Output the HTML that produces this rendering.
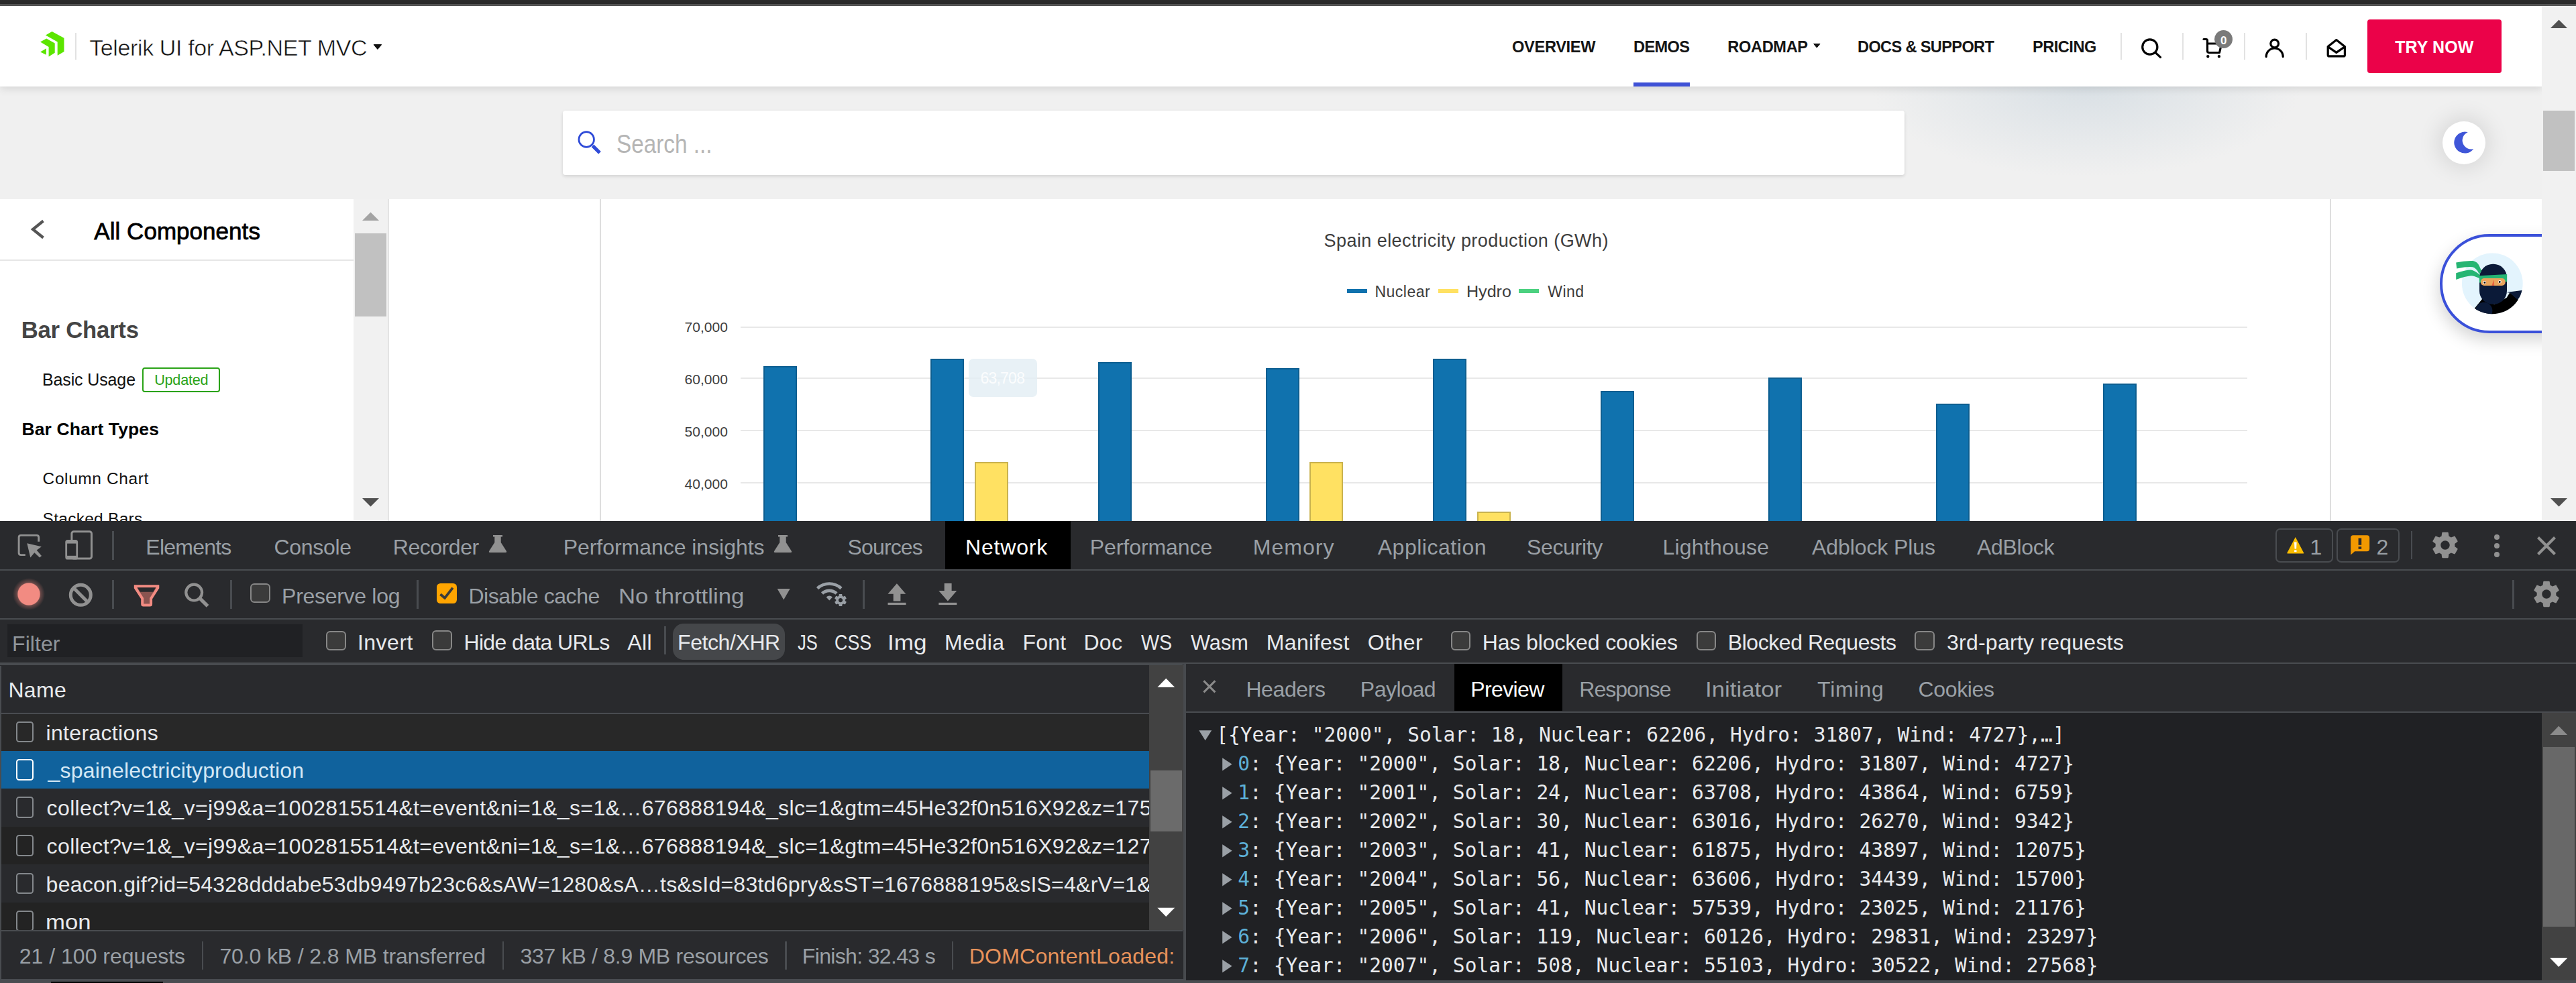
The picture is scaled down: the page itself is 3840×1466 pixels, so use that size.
<!DOCTYPE html>
<html lang="en"><head><meta charset="utf-8"><title>Telerik UI for ASP.NET MVC - Bar Charts</title>
<style>
html,body{margin:0;padding:0}
body{width:3840px;height:1466px;overflow:hidden;position:relative;background:#fff;font-family:"Liberation Sans",sans-serif}
.a{position:absolute;display:block}
.t{white-space:pre}
.m{font-family:"Liberation Mono",monospace}
.dm{font-family:"DejaVu Sans Mono",monospace}
.d{font-family:"DejaVu Sans",sans-serif}
.dc{font-family:"DejaVu Sans Condensed","DejaVu Sans",sans-serif}
</style></head>
<body>
<div class="a" style="left:0px;top:0px;width:3790px;height:777px;background:#f0f0f0;"></div>
<div class="a" style="left:2600px;top:129px;width:1000px;height:168px;background:radial-gradient(ellipse 320px 135px at 51% 0%,rgba(203,214,222,.62),rgba(240,240,240,0) 100%);"></div>
<div class="a" style="left:0px;top:0px;width:3840px;height:6px;background:#2b2b2b;"></div>
<div class="a" style="left:0px;top:6px;width:3840px;height:3px;background:#555;"></div>
<div class="a" style="left:0px;top:9px;width:3790px;height:120px;background:#fff;box-shadow:0 3px 12px rgba(0,0,0,.12);"></div>
<svg class="a" style="left:56px;top:44px;" width="44" height="44" viewBox="0 0 44 44"><g fill="#5ce500"><path d="M12 8.4 21.5 2.9 39.5 12.8V32.9L29.7 38.7V18.6Z"/><path d="M4.1 18.4 13.2 13.5 25.7 20.4V34.7L16.6 40.5V25.9Z"/><path d="M4.1 33.5 12.9 28.3V37.8Z"/></g></svg>
<div class="a" style="left:112px;top:49px;width:2px;height:40px;background:#e2e2e2;"></div>
<span class="a t" style="left:133.2px;top:54.1px;font-size:34px;line-height:34px;color:#111;letter-spacing:-0.38px;-webkit-text-stroke:.55px #fff;">Telerik UI for ASP.NET MVC</span>
<svg class="a" style="left:555px;top:64px;" width="16" height="12" viewBox="0 0 16 12"><path d="M2.4 2.7H13.4L7.9 9.2Z" fill="#111" stroke="#111" stroke-width="1.2" stroke-linejoin="round"/></svg>
<span class="a t" style="left:2254.1px;top:58.6px;font-size:23.6px;line-height:23.6px;color:#151515;font-weight:700;letter-spacing:-0.33px;">OVERVIEW</span>
<span class="a t" style="left:2435.0px;top:58.6px;font-size:23.6px;line-height:23.6px;color:#151515;font-weight:700;letter-spacing:-0.62px;">DEMOS</span>
<div class="a" style="left:2435px;top:123px;width:84px;height:6px;background:#3f51d6;"></div>
<span class="a t" style="left:2575.2px;top:58.6px;font-size:23.6px;line-height:23.6px;color:#151515;font-weight:700;letter-spacing:-0.33px;">ROADMAP</span>
<svg class="a" style="left:2701px;top:62.5px;" width="16" height="12" viewBox="0 0 16 12"><path d="M2.6 2.4H12L7.3 8Z" fill="#111" stroke="#111" stroke-width="1" stroke-linejoin="round"/></svg>
<span class="a t" style="left:2769.0px;top:58.6px;font-size:23.6px;line-height:23.6px;color:#151515;font-weight:700;letter-spacing:-0.65px;">DOCS &amp; SUPPORT</span>
<span class="a t" style="left:3030.0px;top:58.6px;font-size:23.6px;line-height:23.6px;color:#151515;font-weight:700;letter-spacing:-0.50px;">PRICING</span>
<div class="a" style="left:3161px;top:49px;width:2px;height:40px;background:#e2e2e2;"></div>
<div class="a" style="left:3253px;top:49px;width:2px;height:40px;background:#e2e2e2;"></div>
<div class="a" style="left:3345px;top:49px;width:2px;height:40px;background:#e2e2e2;"></div>
<div class="a" style="left:3437px;top:49px;width:2px;height:40px;background:#e2e2e2;"></div>
<svg class="a" style="left:3185px;top:50px;" width="44" height="44" viewBox="0 0 44 44"><g fill="none" stroke="#000" stroke-width="3.2" stroke-linecap="round"><circle cx="19.8" cy="20" r="11.1"/><path d="M28 28.3 35.5 35.3"/></g></svg>
<svg class="a" style="left:3278px;top:50px;" width="44" height="44" viewBox="0 0 44 44"><g fill="none" stroke="#000" stroke-width="3.2" stroke-linecap="round" stroke-linejoin="round"><path d="M7 8.5H10.5Q12.5 8.5 12.5 10.5V26Q12.5 28.5 15 28.5H30.5L32.5 20"/><path d="M13 15H32"/></g><circle cx="13.3" cy="34.1" r="2.2"/><circle cx="29.9" cy="34.1" r="2.2"/></svg>
<div class="a" style="left:3301.3px;top:45.2px;width:27.2px;height:27.2px;background:#7a7a7a;border-radius:50%;"></div>
<span class="a t" style="left:3310.0px;top:51.6px;font-size:17px;line-height:17px;color:#fff;font-weight:700;">0</span>
<svg class="a" style="left:3368px;top:50px;" width="46" height="44" viewBox="0 0 46 44"><g fill="none" stroke="#000" stroke-width="3.2" stroke-linecap="round"><circle cx="22.7" cy="15" r="5.9"/><path d="M10.2 34.5A12.5 12.5 0 0 1 35.2 34.5"/></g></svg>
<svg class="a" style="left:3460px;top:50px;" width="46" height="44" viewBox="0 0 46 44"><g fill="none" stroke="#000" stroke-width="3.2" stroke-linecap="round" stroke-linejoin="round"><path d="M12.2 33.9H33.4Q35.4 33.9 35.4 31.9V19.5L22.8 9.6 10.2 19.5V31.9Q10.2 33.9 12.2 33.9Z"/><path d="M11.2 20.4 22.8 28.4 34.4 20.4"/></g></svg>
<div class="a" style="left:3529px;top:29px;width:200px;height:80px;background:#eb0249;border-radius:4px;"></div>
<span class="a t" style="left:3570.2px;top:57.8px;font-size:25px;line-height:25px;color:#fff;font-weight:700;letter-spacing:0.08px;">TRY NOW</span>
<div class="a" style="left:839px;top:165px;width:2000px;height:96px;background:#fff;border-radius:4px;box-shadow:0 2px 5px rgba(0,0,0,.13);"></div>
<svg class="a" style="left:856px;top:190px;" width="46" height="46" viewBox="0 0 46 46"><g fill="none" stroke="#2f4bd8" stroke-linecap="butt"><circle cx="18.2" cy="18" r="11.3" stroke-width="2.7"/><path d="M27.5 27.3 38 37.8" stroke-width="5.2"/></g></svg>
<span class="a t" style="left:919.3px;top:195.3px;font-size:39px;line-height:39px;color:#b5b5b5;transform:scaleX(0.8537);transform-origin:0 0;">Search ...</span>
<div class="a" style="left:3641px;top:180.7px;width:64px;height:64px;background:#fff;border-radius:50%;box-shadow:0 0 32px 7px rgba(0,0,0,.10);"></div>
<svg class="a" style="left:3652px;top:192px;" width="42" height="42" viewBox="0 0 42 42"><path d="M26.7 5.2A16 16 0 1 0 35.3 29.9 13.1 13.1 0 0 1 26.7 5.2Z" fill="#3f56d8"/></svg>
<div class="a" style="left:3789px;top:9px;width:51px;height:768px;background:#f1f1f1;"></div>
<svg class="a" style="left:3789px;top:8px;" width="51" height="51" viewBox="0 0 51 51"><path d="M13 34H38L25.5 21.5Z" fill="#505050"/></svg>
<div class="a" style="left:3791px;top:165px;width:47px;height:90px;background:#c1c1c1;"></div>
<svg class="a" style="left:3789px;top:726px;" width="51" height="51" viewBox="0 0 51 51"><path d="M13 17H38L25.5 29.5Z" fill="#505050"/></svg>
<div class="a" style="left:0px;top:297px;width:527px;height:480px;background:#fff;"></div>
<div class="a" style="left:527px;top:297px;width:52px;height:480px;background:#f1f1f1;"></div>
<div class="a" style="left:579px;top:297px;width:3210px;height:480px;background:#fff;"></div>
<div class="a" style="left:578px;top:297px;width:2px;height:480px;background:#e4e4e4;"></div>
<div class="a" style="left:894px;top:297px;width:2px;height:480px;background:#dedede;"></div>
<div class="a" style="left:3473px;top:297px;width:2px;height:480px;background:#dedede;"></div>
<svg class="a" style="left:527px;top:296px;" width="51" height="51" viewBox="0 0 51 51"><path d="M13 33H38L25.5 20.5Z" fill="#a3a3a3"/></svg>
<div class="a" style="left:529px;top:348px;width:47px;height:124px;background:#c1c1c1;"></div>
<svg class="a" style="left:527px;top:726px;" width="51" height="51" viewBox="0 0 51 51"><path d="M13 17H38L25.5 29.5Z" fill="#505050"/></svg>
<svg class="a" style="left:40px;top:322px;" width="34" height="40" viewBox="0 0 34 40"><path d="M24.5 7.5 9 20 24.5 32.5" fill="none" stroke="#555" stroke-width="4.2"/></svg>
<span class="a t" style="left:140.3px;top:326.5px;font-size:35px;line-height:35px;color:#000;letter-spacing:0.04px;-webkit-text-stroke:.8px #000;">All Components</span>
<div class="a" style="left:0px;top:387px;width:527px;height:2px;background:#e6e6e6;"></div>
<span class="a t" style="left:31.7px;top:474.9px;font-size:34.7px;line-height:34.7px;color:#444;font-weight:700;letter-spacing:-0.23px;">Bar Charts</span>
<span class="a t" style="left:63.0px;top:553.8px;font-size:25px;line-height:25px;color:#111;letter-spacing:-0.13px;">Basic Usage</span>
<div class="a" style="left:212px;top:548px;width:116px;height:37px;background:#fff;box-sizing:border-box;border:2px solid #2aa316;border-radius:4px;"></div>
<span class="a t" style="left:230.2px;top:556.4px;font-size:21.7px;line-height:21.7px;color:#2aa316;letter-spacing:-0.27px;">Updated</span>
<span class="a t" style="left:32.5px;top:626.5px;font-size:26.5px;line-height:26.5px;color:#000;font-weight:700;letter-spacing:0.12px;">Bar Chart Types</span>
<span class="a t" style="left:63.6px;top:701.5px;font-size:24.5px;line-height:24.5px;color:#111;letter-spacing:0.59px;">Column Chart</span>
<span class="a t" style="left:63.6px;top:762.1px;font-size:24.5px;line-height:24.5px;color:#111;letter-spacing:0.27px;">Stacked Bars</span>
<span class="a t" style="left:1973.6px;top:346.4px;font-size:27px;line-height:27px;color:#3d3d3d;letter-spacing:0.43px;">Spain electricity production (GWh)</span>
<div class="a" style="left:2008px;top:431px;width:30px;height:6px;background:#1072ae;"></div>
<span class="a t" style="left:2049.4px;top:424.4px;font-size:23px;line-height:23px;color:#3d3d3d;letter-spacing:0.50px;">Nuclear</span>
<div class="a" style="left:2144px;top:431px;width:30px;height:6px;background:#ffe162;"></div>
<span class="a t" style="left:2185.5px;top:424.4px;font-size:23px;line-height:23px;color:#3d3d3d;transform:scaleX(1.0898);transform-origin:0 0;">Hydro</span>
<div class="a" style="left:2264px;top:431px;width:30px;height:6px;background:#4cd180;"></div>
<span class="a t" style="left:2307.3px;top:424.4px;font-size:23px;line-height:23px;color:#3d3d3d;letter-spacing:0.43px;">Wind</span>
<div class="a" style="left:1104px;top:487px;width:2246px;height:2px;background:#e8e8e8;"></div>
<span class="a t" style="left:1020.6px;top:477.2px;font-size:21px;line-height:21px;color:#3d3d3d;">70,000</span>
<div class="a" style="left:1104px;top:563px;width:2246px;height:2px;background:#e8e8e8;"></div>
<span class="a t" style="left:1020.6px;top:555.2px;font-size:21px;line-height:21px;color:#3d3d3d;">60,000</span>
<div class="a" style="left:1104px;top:641px;width:2246px;height:2px;background:#e8e8e8;"></div>
<span class="a t" style="left:1020.6px;top:633.2px;font-size:21px;line-height:21px;color:#3d3d3d;">50,000</span>
<div class="a" style="left:1104px;top:719px;width:2246px;height:2px;background:#e8e8e8;"></div>
<span class="a t" style="left:1020.6px;top:711.2px;font-size:21px;line-height:21px;color:#3d3d3d;">40,000</span>
<div class="a" style="left:1137.6px;top:546.3px;width:50px;height:234.7px;background:#1072ae;box-sizing:border-box;border:2px solid #0d5e90;"></div>
<div class="a" style="left:1387.3px;top:534.6px;width:50px;height:246.4px;background:#1072ae;box-sizing:border-box;border:2px solid #0d5e90;"></div>
<div class="a" style="left:1637.0px;top:540.0px;width:50px;height:241.0px;background:#1072ae;box-sizing:border-box;border:2px solid #0d5e90;"></div>
<div class="a" style="left:1886.7px;top:548.9px;width:50px;height:232.1px;background:#1072ae;box-sizing:border-box;border:2px solid #0d5e90;"></div>
<div class="a" style="left:2136.4px;top:535.4px;width:50px;height:245.6px;background:#1072ae;box-sizing:border-box;border:2px solid #0d5e90;"></div>
<div class="a" style="left:2386.1px;top:582.7px;width:50px;height:198.3px;background:#1072ae;box-sizing:border-box;border:2px solid #0d5e90;"></div>
<div class="a" style="left:2635.8px;top:562.5px;width:50px;height:218.5px;background:#1072ae;box-sizing:border-box;border:2px solid #0d5e90;"></div>
<div class="a" style="left:2885.5px;top:601.7px;width:50px;height:179.3px;background:#1072ae;box-sizing:border-box;border:2px solid #0d5e90;"></div>
<div class="a" style="left:3135.2px;top:571.5px;width:50px;height:209.5px;background:#1072ae;box-sizing:border-box;border:2px solid #0d5e90;"></div>
<div class="a" style="left:1453.0px;top:689.3px;width:50px;height:91.7px;background:#ffe162;box-sizing:border-box;border:2px solid #c9b24e;"></div>
<div class="a" style="left:1952.4px;top:689.0px;width:50px;height:92.0px;background:#ffe162;box-sizing:border-box;border:2px solid #c9b24e;"></div>
<div class="a" style="left:2202.1px;top:762.8px;width:50px;height:18.2px;background:#ffe162;box-sizing:border-box;border:2px solid #c9b24e;"></div>
<div class="a" style="left:1444.4px;top:535px;width:101.4px;height:56.8px;background:rgba(226,237,244,.8);border-radius:7px;"></div>
<span class="a t" style="left:1461.4px;top:553.0px;font-size:23px;line-height:23px;color:rgba(255,255,255,.85);letter-spacing:-0.76px;">63,708</span>
<div class="a" style="left:3637px;top:348.5px;width:300px;height:148.5px;box-sizing:border-box;border:4.5px solid #3a50d9;border-radius:74.25px;background:#fff;box-shadow:-2px 10px 24px rgba(0,0,0,.17);clip-path:inset(-50px 148px -50px -50px);"></div>
<svg class="a" style="left:3655px;top:375px;" width="112" height="100" viewBox="0 0 112 100"><defs><clipPath id="nj"><circle cx="60.3" cy="47.8" r="45.4"/></clipPath></defs>
<circle cx="60.3" cy="47.8" r="45.4" fill="#e3f4fd"/>
<g clip-path="url(#nj)"><path d="M28 92 45.5 70.6 63.2 78.7 81.6 69 86.4 61.3 98 71 112 80V100H28Z" fill="#000"/><path d="M81.6 60.9 110 57.3 98 72 86.4 61.7Z" fill="#0b1a38"/><circle cx="47.8" cy="88.4" r="12.6" fill="#0b1a38"/></g>
<rect x="41" y="18.8" width="41" height="60" rx="20" fill="#0b1a38"/>
<path d="M40.6 36.2 82.2 33.9V45L41 46.5Z" fill="#25b573"/>
<rect x="43" y="40" width="36.7" height="11" rx="5" fill="#e9a45c"/>
<circle cx="48.7" cy="46.2" r="2.3" fill="#fff"/><circle cx="71.5" cy="45.3" r="2.3" fill="#fff"/><circle cx="48.9" cy="46.4" r="1.4" fill="#000"/><circle cx="71.3" cy="45.5" r="1.4" fill="#000"/>
<path d="M59.4 51 62.5 42 63.2 51Z" fill="#e8623e"/>
<path d="M6.2 16.5Q20 13.5 31.3 14 38 15 41 22L44.2 29 41 34Q37 26 33 24 28 21.5 7.2 25.5Z" fill="#25b573"/>
<path d="M6.2 32.3Q20 27.5 28.4 27.5 34 28.5 41 34.2V40Q33 36 28.4 36.2 20 37 6.2 42Z" fill="#25b573"/></svg>
<div class="a" style="left:0px;top:777px;width:3840px;height:689px;background:#292a2d;"></div>
<div class="a" style="left:0px;top:849px;width:3840px;height:2px;background:#494c50;"></div>
<svg class="a" style="left:20px;top:786px;" width="130" height="56" viewBox="0 0 130 56"><path d="M17.8 41.6H11.1Q8.1 41.6 8.1 38.6V15.4Q8.1 12.4 11.1 12.4H34.7Q37.7 12.4 37.7 15.4V21.8" fill="none" stroke="#919191" stroke-width="2.9"/><path d="M20.3 24.3 41.9 29.3 34.7 34.5 42 43.1 39.1 45.6 31.3 38.2 25.3 45.6Z" fill="#919191"/><rect x="86.9" y="6.8" width="29.6" height="40.2" rx="3" fill="none" stroke="#919191" stroke-width="3"/><rect x="77.3" y="18.9" width="18.8" height="29.6" rx="3.6" fill="#919191"/><rect x="80.1" y="24.6" width="13.3" height="18.2" fill="#292a2d"/></svg>
<div class="a" style="left:167.2px;top:792.2px;width:2.8px;height:42.5px;background:#494c50;"></div>
<span class="a t" style="left:217.3px;top:799.9px;font-size:32px;line-height:32px;color:#9aa0a6;letter-spacing:-0.76px;">Elements</span>
<span class="a t" style="left:408.4px;top:799.9px;font-size:32px;line-height:32px;color:#9aa0a6;letter-spacing:-0.28px;">Console</span>
<span class="a t" style="left:585.8px;top:799.9px;font-size:32px;line-height:32px;color:#9aa0a6;letter-spacing:-0.47px;">Recorder</span>
<svg class="a" style="left:728px;top:798.2px;" width="28" height="26" viewBox="0 0 28 26"><path d="M7 0H21V2.4H18.7V11L26.8 23.8Q28 26 25.6 26H2.4Q0 26 1.2 23.8L9.3 11V2.4H7Z" fill="#919191"/></svg>
<span class="a t" style="left:839.7px;top:799.9px;font-size:32px;line-height:32px;color:#9aa0a6;letter-spacing:-0.04px;">Performance insights</span>
<svg class="a" style="left:1152.6px;top:798.2px;" width="28" height="26" viewBox="0 0 28 26"><path d="M7 0H21V2.4H18.7V11L26.8 23.8Q28 26 25.6 26H2.4Q0 26 1.2 23.8L9.3 11V2.4H7Z" fill="#919191"/></svg>
<span class="a t" style="left:1263.6px;top:799.9px;font-size:32px;line-height:32px;color:#9aa0a6;letter-spacing:-0.87px;">Sources</span>
<div class="a" style="left:1408.8px;top:777px;width:187.2px;height:71.5px;background:#000;"></div>
<span class="a t" style="left:1439.0px;top:799.9px;font-size:32px;line-height:32px;color:#fff;letter-spacing:0.83px;">Network</span>
<span class="a t" style="left:1624.8px;top:799.9px;font-size:32px;line-height:32px;color:#9aa0a6;letter-spacing:-0.08px;">Performance</span>
<span class="a t" style="left:1867.8px;top:799.9px;font-size:32px;line-height:32px;color:#9aa0a6;letter-spacing:1.04px;">Memory</span>
<span class="a t" style="left:2053.7px;top:799.9px;font-size:32px;line-height:32px;color:#9aa0a6;letter-spacing:0.53px;">Application</span>
<span class="a t" style="left:2276.0px;top:799.9px;font-size:32px;line-height:32px;color:#9aa0a6;letter-spacing:-0.34px;">Security</span>
<span class="a t" style="left:2478.5px;top:799.9px;font-size:32px;line-height:32px;color:#9aa0a6;letter-spacing:0.22px;">Lighthouse</span>
<span class="a t" style="left:2701.0px;top:799.9px;font-size:32px;line-height:32px;color:#9aa0a6;letter-spacing:-0.09px;">Adblock Plus</span>
<span class="a t" style="left:2947.0px;top:799.9px;font-size:32px;line-height:32px;color:#9aa0a6;letter-spacing:-0.33px;">AdBlock</span>
<div class="a" style="left:3392px;top:787.5px;width:85.8px;height:51px;background:transparent;box-sizing:border-box;border:2.2px solid #494c50;border-radius:7px;"></div>
<svg class="a" style="left:3407px;top:798px;" width="30" height="30" viewBox="0 0 30 30"><path d="M14.8 3 27.2 26.6Q27.6 27.6 26.5 27.6H3.1Q2 27.6 2.4 26.6Z" fill="#f9bc00"/><path d="M13 10.5H16.6L16.1 20.6H13.5Z" fill="#fff"/><rect x="13.1" y="22.3" width="3.4" height="2.7" fill="#fff"/></svg>
<span class="a t" style="left:3443.6px;top:799.7px;font-size:32px;line-height:32px;color:#9aa0a6;">1</span>
<div class="a" style="left:3483.2px;top:787.5px;width:94.2px;height:51px;background:transparent;box-sizing:border-box;border:2.2px solid #494c50;border-radius:7px;"></div>
<svg class="a" style="left:3502px;top:796px;" width="34" height="34" viewBox="0 0 34 34"><path d="M5.8 2.2H26.4Q30.2 2.2 30.2 6V22.4Q30.2 26.2 26.4 26.2H8.2L2.2 31.5V6Q2.2 2.2 5.8 2.2Z" fill="#f29900"/><rect x="13.6" y="6.6" width="4.6" height="10.2" fill="#292a2d"/><rect x="13.6" y="19.2" width="4.6" height="3.6" fill="#292a2d"/></svg>
<span class="a t" style="left:3542.6px;top:799.7px;font-size:32px;line-height:32px;color:#9aa0a6;">2</span>
<div class="a" style="left:3593.6px;top:792.1px;width:2.5px;height:42.4px;background:#494c50;"></div>
<svg class="a" style="left:3622.2px;top:790.4px;" width="46" height="46" viewBox="0 0 24 24"><path fill="#919191" fill-rule="evenodd" d="M19.43 12.98c.04-.32.07-.64.07-.98s-.03-.66-.07-.98l2.11-1.65c.19-.15.24-.42.12-.64l-2-3.46c-.12-.22-.39-.3-.61-.22l-2.49 1c-.52-.4-1.08-.73-1.69-.98l-.38-2.65C14.46 2.18 14.25 2 14 2h-4c-.25 0-.46.18-.49.42l-.38 2.65c-.61.25-1.17.59-1.69.98l-2.49-1c-.23-.09-.49 0-.61.22l-2 3.46c-.13.22-.07.49.12.64l2.11 1.65c-.04.32-.07.65-.07.98s.03.66.07.98l-2.11 1.65c-.19.15-.24.42-.12.64l2 3.46c.12.22.39.3.61.22l2.49-1c.52.4 1.08.73 1.69.98l.38 2.65c.03.24.24.42.49.42h4c.25 0 .46-.18.49-.42l.38-2.65c.61-.25 1.17-.59 1.69-.98l2.49 1c.23.09.49 0 .61-.22l2-3.46c.12-.22.07-.49-.12-.64l-2.11-1.65zM12 15.5c-1.93 0-3.500-1.570-3.500-3.500s1.570-3.500 3.500-3.500 3.500 1.570 3.500 3.500-1.570 3.500-3.500 3.500z"/></svg>
<div class="a" style="left:3717.9px;top:797.0px;width:8.2px;height:8.2px;background:#919191;border-radius:50%;"></div>
<div class="a" style="left:3717.9px;top:809.8px;width:8.2px;height:8.2px;background:#919191;border-radius:50%;"></div>
<div class="a" style="left:3717.9px;top:823.1999999999999px;width:8.2px;height:8.2px;background:#919191;border-radius:50%;"></div>
<svg class="a" style="left:3778px;top:796px;" width="36" height="36" viewBox="0 0 36 36"><path d="M5.5 5.5 30.5 30.5M30.5 5.5 5.5 30.5" stroke="#919191" stroke-width="4.2" fill="none"/></svg>
<div class="a" style="left:0px;top:921.5px;width:3840px;height:2px;background:#494c50;"></div>
<div class="a" style="left:19.1px;top:862px;width:48px;height:48px;background:radial-gradient(circle closest-side,#f28b82 0,#f28b82 67%,rgba(242,139,130,.32) 72%,rgba(242,139,130,0) 100%);border-radius:50%;"></div>
<svg class="a" style="left:100px;top:867px;" width="40" height="40" viewBox="0 0 40 40"><circle cx="20.3" cy="20.3" r="15" fill="none" stroke="#919191" stroke-width="5"/><path d="M9.7 9.7 30.9 30.9" stroke="#919191" stroke-width="5"/></svg>
<div class="a" style="left:167.2px;top:865px;width:2.8px;height:42.8px;background:#494c50;"></div>
<svg class="a" style="left:196px;top:868px;" width="46" height="40" viewBox="0 0 46 40"><path d="M5.8 6.2H39.3V8.6L29.1 24.6V33Q29.1 34.5 27.4 34.5H17.9Q16.2 34.5 16.2 33V24.6L5.8 8.6Z" fill="#8a5450" stroke="#f28b82" stroke-width="4" stroke-linejoin="miter"/><path d="M9 8.2H36.1L32.4 14.7H12.7Z" fill="#292a2d"/></svg>
<svg class="a" style="left:270px;top:865px;" width="46" height="46" viewBox="0 0 46 46"><circle cx="19.2" cy="18.6" r="11.9" fill="none" stroke="#919191" stroke-width="4.2"/><path d="M27.4 26.8 39.6 38.8" stroke="#919191" stroke-width="5.2"/></svg>
<div class="a" style="left:343.3px;top:865px;width:2.7px;height:42.8px;background:#494c50;"></div>
<div class="a" style="left:373px;top:870.4px;width:29.6px;height:29px;background:#3b3b3b;box-sizing:border-box;border:2.6px solid #878787;border-radius:6px;"></div>
<span class="a t" style="left:420.1px;top:872.9px;font-size:32px;line-height:32px;color:#9aa0a6;letter-spacing:-0.30px;">Preserve log</span>
<div class="a" style="left:621.4px;top:865.3px;width:2.5px;height:42.4px;background:#494c50;"></div>
<div class="a" style="left:651px;top:869.9px;width:30px;height:30px;background:#ffa500;border-radius:5.5px;"></div>
<svg class="a" style="left:651px;top:869.9px;" width="30" height="30" viewBox="0 0 30 30"><path d="M5.4 16.2 12 21.8 23.9 6.6" fill="none" stroke="#3b3b3b" stroke-width="3.8"/></svg>
<span class="a t" style="left:698.4px;top:872.9px;font-size:32px;line-height:32px;color:#9aa0a6;letter-spacing:-0.42px;">Disable cache</span>
<span class="a t" style="left:922.3px;top:872.9px;font-size:32px;line-height:32px;color:#9aa0a6;transform:scaleX(1.0858);transform-origin:0 0;">No throttling</span>
<svg class="a" style="left:1158px;top:877px;" width="21" height="18" viewBox="0 0 21 18"><path d="M0.7 1H19.7L10.2 17.4Z" fill="#919191"/></svg>
<svg class="a" style="left:1214px;top:864px;" width="52" height="46" viewBox="0 0 52 46"><g fill="none" stroke="#9aa0a6" stroke-width="4.7"><path d="M4.5 13.5A26 26 0 0 1 40 13.5"/><path d="M11.5 21A16 16 0 0 1 33 21"/></g><path d="M17.6 26.5A7.5 7.5 0 0 1 27 26.5L22.3 31.5Z" fill="#9aa0a6"/><g transform="translate(28.2,20.3) scale(.9)"><circle cx="12" cy="12" r="11.5" fill="#292a2d"/><path fill="#9aa0a6" fill-rule="evenodd" d="M19.43 12.98c.04-.32.07-.64.07-.98s-.03-.66-.07-.98l2.11-1.65c.19-.15.24-.42.12-.64l-2-3.46c-.12-.22-.39-.3-.61-.22l-2.49 1c-.52-.4-1.08-.73-1.69-.98l-.38-2.65C14.46 2.18 14.25 2 14 2h-4c-.25 0-.46.18-.49.42l-.38 2.65c-.61.25-1.17.59-1.69.98l-2.49-1c-.23-.09-.49 0-.61.22l-2 3.46c-.13.22-.07.49.12.64l2.11 1.65c-.04.32-.07.65-.07.98s.03.66.07.98l-2.11 1.65c-.19.15-.24.42-.12.64l2 3.46c.12.22.39.3.61.22l2.49-1c.52.4 1.08.73 1.69.98l.38 2.65c.03.24.24.42.49.42h4c.25 0 .46-.18.49-.42l.38-2.65c.61-.25 1.17-.59 1.69-.98l2.49 1c.23.09.49 0 .61-.22l2-3.46c.12-.22.07-.49-.12-.64l-2.11-1.65zM12 15.5c-1.93 0-3.500-1.570-3.500-3.500s1.570-3.500 3.500-3.500 3.500 1.570 3.500 3.500-1.570 3.500-3.500 3.500z"/></g></svg>
<div class="a" style="left:1286.2px;top:865.3px;width:2.5px;height:42.4px;background:#494c50;"></div>
<svg class="a" style="left:1320px;top:866px;" width="34" height="40" viewBox="0 0 34 40"><path d="M16.9 4.3 30.3 19.7H22.4V30.6H11.7V19.7H3.5Z" fill="#919191"/><rect x="3.5" y="32.8" width="27" height="3.3" fill="#919191"/></svg>
<svg class="a" style="left:1396px;top:866px;" width="34" height="40" viewBox="0 0 34 40"><path d="M11.7 3.9H22.6V15H30.3L16.9 30.6 3.3 15H11.7Z" fill="#919191"/><rect x="3.3" y="32.8" width="27" height="3.3" fill="#919191"/></svg>
<div class="a" style="left:3745.2px;top:865.3px;width:2.5px;height:42.4px;background:#494c50;"></div>
<svg class="a" style="left:3773.1px;top:863.3px;" width="46" height="46" viewBox="0 0 24 24"><path fill="#919191" fill-rule="evenodd" d="M19.43 12.98c.04-.32.07-.64.07-.98s-.03-.66-.07-.98l2.11-1.65c.19-.15.24-.42.12-.64l-2-3.46c-.12-.22-.39-.3-.61-.22l-2.49 1c-.52-.4-1.08-.73-1.69-.98l-.38-2.65C14.46 2.18 14.25 2 14 2h-4c-.25 0-.46.18-.49.42l-.38 2.65c-.61.25-1.17.59-1.69.98l-2.49-1c-.23-.09-.49 0-.61.22l-2 3.46c-.13.22-.07.49.12.64l2.11 1.65c-.04.32-.07.65-.07.98s.03.66.07.98l-2.11 1.65c-.19.15-.24.42-.12.64l2 3.46c.12.22.39.3.61.22l2.49-1c.52.4 1.08.73 1.69.98l.38 2.65c.03.24.24.42.49.42h4c.25 0 .46-.18.49-.42l.38-2.65c.61-.25 1.17-.59 1.69-.98l2.49 1c.23.09.49 0 .61-.22l2-3.46c.12-.22.07-.49-.12-.64l-2.11-1.65zM12 15.5c-1.93 0-3.500-1.570-3.500-3.500s1.570-3.500 3.500-3.500 3.500 1.570 3.500 3.500-1.570 3.500-3.500 3.500z"/></svg>
<div class="a" style="left:0px;top:988px;width:3840px;height:2.1px;background:#494c50;"></div>
<div class="a" style="left:0px;top:990px;width:1763px;height:2px;background:#494c50;"></div>
<div class="a" style="left:11px;top:931.2px;width:439.7px;height:49px;background:#202124;"></div>
<span class="a t" style="left:18.0px;top:943.9px;font-size:32px;line-height:32px;color:#8f959b;letter-spacing:0.08px;">Filter</span>
<div class="a" style="left:486.2px;top:940.8px;width:29.6px;height:29px;background:#3b3b3b;box-sizing:border-box;border:2.6px solid #878787;border-radius:6px;"></div>
<span class="a t" style="left:532.9px;top:941.9px;font-size:32px;line-height:32px;color:#e8eaed;letter-spacing:0.50px;">Invert</span>
<div class="a" style="left:643.8px;top:940.3px;width:30.5px;height:29.6px;background:#3b3b3b;box-sizing:border-box;border:2.6px solid #878787;border-radius:6px;"></div>
<span class="a t" style="left:691.4px;top:941.9px;font-size:32px;line-height:32px;color:#e8eaed;letter-spacing:-0.62px;">Hide data URLs</span>
<span class="a t" style="left:935.2px;top:941.9px;font-size:32px;line-height:32px;color:#e8eaed;letter-spacing:0.40px;">All</span>
<div class="a" style="left:990px;top:934.2px;width:2.5px;height:42.3px;background:#494c50;"></div>
<div class="a" style="left:1003px;top:930px;width:166.7px;height:53.7px;background:#45474a;border-radius:16px;"></div>
<span class="a t" style="left:1010.0px;top:941.9px;font-size:32px;line-height:32px;color:#e8eaed;letter-spacing:-0.41px;">Fetch/XHR</span>
<span class="a t" style="left:1188.6px;top:941.9px;font-size:32px;line-height:32px;color:#e8eaed;transform:scaleX(0.8000);transform-origin:0 0;">JS</span>
<span class="a t" style="left:1243.9px;top:941.9px;font-size:32px;line-height:32px;color:#e8eaed;transform:scaleX(0.8391);transform-origin:0 0;">CSS</span>
<span class="a t" style="left:1323.4px;top:941.9px;font-size:32px;line-height:32px;color:#e8eaed;transform:scaleX(1.0959);transform-origin:0 0;">Img</span>
<span class="a t" style="left:1408.0px;top:941.9px;font-size:32px;line-height:32px;color:#e8eaed;letter-spacing:0.50px;">Media</span>
<span class="a t" style="left:1524.5px;top:941.9px;font-size:32px;line-height:32px;color:#e8eaed;letter-spacing:0.17px;">Font</span>
<span class="a t" style="left:1615.4px;top:941.9px;font-size:32px;line-height:32px;color:#e8eaed;letter-spacing:0.30px;">Doc</span>
<span class="a t" style="left:1700.9px;top:941.9px;font-size:32px;line-height:32px;color:#e8eaed;transform:scaleX(0.8961);transform-origin:0 0;">WS</span>
<span class="a t" style="left:1775.4px;top:941.9px;font-size:32px;line-height:32px;color:#e8eaed;transform:scaleX(0.9602);transform-origin:0 0;">Wasm</span>
<span class="a t" style="left:1887.7px;top:941.9px;font-size:32px;line-height:32px;color:#e8eaed;letter-spacing:0.39px;">Manifest</span>
<span class="a t" style="left:2038.8px;top:941.9px;font-size:32px;line-height:32px;color:#e8eaed;letter-spacing:0.47px;">Other</span>
<div class="a" style="left:2162.5px;top:940.8px;width:29.6px;height:29px;background:#3b3b3b;box-sizing:border-box;border:2.6px solid #878787;border-radius:6px;"></div>
<span class="a t" style="left:2209.7px;top:941.9px;font-size:32px;line-height:32px;color:#e8eaed;letter-spacing:-0.12px;">Has blocked cookies</span>
<div class="a" style="left:2528.6px;top:940.8px;width:29.6px;height:29px;background:#3b3b3b;box-sizing:border-box;border:2.6px solid #878787;border-radius:6px;"></div>
<span class="a t" style="left:2575.8px;top:941.9px;font-size:32px;line-height:32px;color:#e8eaed;letter-spacing:-0.45px;">Blocked Requests</span>
<div class="a" style="left:2854px;top:940.8px;width:29.6px;height:29px;background:#3b3b3b;box-sizing:border-box;border:2.6px solid #878787;border-radius:6px;"></div>
<span class="a t" style="left:2902.0px;top:941.9px;font-size:32px;line-height:32px;color:#e8eaed;letter-spacing:0.24px;">3rd-party requests</span>
<div class="a" style="left:0px;top:993px;width:1713px;height:71.4px;background:#292a2d;"></div>
<span class="a t" style="left:12.4px;top:1012.9px;font-size:32px;line-height:32px;color:#e8eaed;letter-spacing:0.33px;">Name</span>
<div class="a" style="left:0px;top:1062.8px;width:1713px;height:2.3px;background:#494c50;"></div>
<div class="a" style="left:0px;top:1065px;width:1713px;height:55.1px;background:#282828;"></div>
<div class="a" style="left:23.6px;top:1075.5px;width:26.8px;height:31.8px;background:transparent;box-sizing:border-box;border:2.4px solid #84888c;border-radius:4.5px;"></div>
<span class="a t" style="left:68.6px;top:1076.7px;font-size:32px;line-height:32px;color:#e8eaed;letter-spacing:0.31px;">interactions</span>
<div class="a" style="left:0px;top:1119.8px;width:1713px;height:56.4px;background:#10629d;"></div>
<div class="a" style="left:23.6px;top:1132px;width:26.8px;height:31.8px;background:transparent;box-sizing:border-box;border:2.4px solid #fff;border-radius:4.5px;"></div>
<span class="a t" style="left:71.6px;top:1132.9px;font-size:32px;line-height:32px;color:#d5e8f5;letter-spacing:0.17px;">_spainelectricityproduction</span>
<div class="a" style="left:0px;top:1175.9px;width:1713px;height:57.2px;background:#292a2d;"></div>
<div class="a" style="left:23.6px;top:1188.2px;width:26.8px;height:31.8px;background:transparent;box-sizing:border-box;border:2.4px solid #84888c;border-radius:4.5px;"></div>
<span class="a t" style="left:69.6px;top:1189.4px;font-size:32px;line-height:32px;color:#e8eaed;letter-spacing:0.37px;">collect?v=1&amp;_v=j99&amp;a=1002815514&amp;t=event&amp;ni=1&amp;_s=1&amp;…676888194&amp;_slc=1&amp;gtm=45He32f0n516X92&amp;z=175</span>
<div class="a" style="left:0px;top:1232.8px;width:1713px;height:56.9px;background:#232323;"></div>
<div class="a" style="left:23.6px;top:1245px;width:26.8px;height:31.8px;background:transparent;box-sizing:border-box;border:2.4px solid #84888c;border-radius:4.5px;"></div>
<span class="a t" style="left:69.6px;top:1246.1px;font-size:32px;line-height:32px;color:#e8eaed;letter-spacing:0.37px;">collect?v=1&amp;_v=j99&amp;a=1002815514&amp;t=event&amp;ni=1&amp;_s=1&amp;…676888194&amp;_slc=1&amp;gtm=45He32f0n516X92&amp;z=127</span>
<div class="a" style="left:0px;top:1289.4px;width:1713px;height:56.4px;background:#292a2d;"></div>
<div class="a" style="left:23.6px;top:1301.6px;width:26.8px;height:31.8px;background:transparent;box-sizing:border-box;border:2.4px solid #84888c;border-radius:4.5px;"></div>
<span class="a t" style="left:68.6px;top:1302.5px;font-size:32px;line-height:32px;color:#e8eaed;letter-spacing:0.25px;">beacon.gif?id=54328dddabe53db9497b23c6&amp;sAW=1280&amp;sA…ts&amp;sId=83td6pry&amp;sST=1676888195&amp;sIS=4&amp;rV=1&amp;</span>
<div class="a" style="left:0px;top:1345.5px;width:1713px;height:56.8px;background:#232323;"></div>
<div class="a" style="left:23.6px;top:1357.7px;width:26.8px;height:31.8px;background:transparent;box-sizing:border-box;border:2.4px solid #84888c;border-radius:4.5px;"></div>
<span class="a t" style="left:68.4px;top:1358.9px;font-size:32px;line-height:32px;color:#e8eaed;transform:scaleX(1.0864);transform-origin:0 0;">mon</span>
<div class="a" style="left:0px;top:1387px;width:1763px;height:79px;background:#292a2d;"></div>
<div class="a" style="left:0px;top:1387px;width:1763px;height:2px;background:#494c50;"></div>
<span class="a t" style="left:28.8px;top:1409.8px;font-size:32px;line-height:32px;color:#9aa0a6;">21 / 100 requests</span>
<div class="a" style="left:300.9px;top:1403.5px;width:2.4px;height:42.2px;background:#494c50;"></div>
<span class="a t" style="left:327.4px;top:1409.8px;font-size:32px;line-height:32px;color:#9aa0a6;letter-spacing:-0.13px;">70.0 kB / 2.8 MB transferred</span>
<div class="a" style="left:749px;top:1403.5px;width:2.4px;height:42.2px;background:#494c50;"></div>
<span class="a t" style="left:775.6px;top:1409.8px;font-size:32px;line-height:32px;color:#9aa0a6;letter-spacing:-0.29px;">337 kB / 8.9 MB resources</span>
<div class="a" style="left:1170.2px;top:1403.5px;width:2.4px;height:42.2px;background:#494c50;"></div>
<span class="a t" style="left:1195.8px;top:1409.8px;font-size:32px;line-height:32px;color:#9aa0a6;letter-spacing:-0.66px;">Finish: 32.43 s</span>
<div class="a" style="left:1418.7px;top:1403.5px;width:2.4px;height:42.2px;background:#494c50;"></div>
<span class="a t" style="left:1444.7px;top:1409.8px;font-size:32px;line-height:32px;color:#e8935b;letter-spacing:0.26px;">DOMContentLoaded:</span>
<div class="a" style="left:1713px;top:992px;width:51px;height:395px;background:#424242;"></div>
<svg class="a" style="left:1713px;top:993px;" width="50" height="50" viewBox="0 0 50 50"><path d="M12.3 32H38.2L25.2 18.7Z" fill="#fff"/></svg>
<div class="a" style="left:1715.3px;top:1148.5px;width:46.7px;height:91px;background:#6b6b6b;"></div>
<svg class="a" style="left:1713px;top:1336px;" width="50" height="50" viewBox="0 0 50 50"><path d="M12.3 17.7H38.2L25.2 31Z" fill="#fff"/></svg>
<div class="a" style="left:0px;top:993px;width:2.2px;height:470px;background:#494c50;"></div>
<div class="a" style="left:1763.8px;top:990px;width:4.2px;height:476px;background:#474a4e;"></div>
<div class="a" style="left:1768px;top:990px;width:2072px;height:71px;background:#292a2d;"></div>
<div class="a" style="left:1768px;top:1061px;width:2072px;height:2.2px;background:#494c50;"></div>
<div class="a" style="left:1768px;top:1063.2px;width:2072px;height:403px;background:#202124;"></div>
<svg class="a" style="left:1788px;top:1009.4px;" width="30" height="30" viewBox="0 0 30 30"><path d="M6.4 6.4 23.4 23.4M23.4 6.4 6.4 23.4" stroke="#8b8b8b" stroke-width="3" fill="none"/></svg>
<span class="a t" style="left:1857.4px;top:1011.7px;font-size:32px;line-height:32px;color:#9aa0a6;letter-spacing:-0.40px;">Headers</span>
<span class="a t" style="left:2027.8px;top:1011.7px;font-size:32px;line-height:32px;color:#9aa0a6;letter-spacing:-0.47px;">Payload</span>
<div class="a" style="left:2168px;top:990px;width:161.4px;height:70px;background:#000;"></div>
<span class="a t" style="left:2192.3px;top:1011.7px;font-size:32px;line-height:32px;color:#fff;letter-spacing:-0.62px;">Preview</span>
<span class="a t" style="left:2354.3px;top:1011.7px;font-size:32px;line-height:32px;color:#9aa0a6;letter-spacing:-0.99px;">Response</span>
<span class="a t" style="left:2541.7px;top:1011.7px;font-size:32px;line-height:32px;color:#9aa0a6;transform:scaleX(1.0882);transform-origin:0 0;">Initiator</span>
<span class="a t" style="left:2709.0px;top:1011.7px;font-size:32px;line-height:32px;color:#9aa0a6;letter-spacing:0.80px;">Timing</span>
<span class="a t" style="left:2859.6px;top:1011.7px;font-size:32px;line-height:32px;color:#9aa0a6;letter-spacing:-0.37px;">Cookies</span>
<svg class="a" style="left:1786px;top:1088px;" width="22" height="18" viewBox="0 0 22 18"><path d="M1.3 1.3H20.2L10.7 16.2Z" fill="#9aa0a6"/></svg>
<span class="a t dm" style="left:1813.2px;top:1081.8px;font-size:29.5px;line-height:29.5px;color:#e8eaed;letter-spacing:.05px;">[{Year: "2000", Solar: 18, Nuclear: 62206, Hydro: 31807, Wind: 4727},…]</span>
<svg class="a" style="left:1821px;top:1129.1px;" width="18" height="22" viewBox="0 0 18 22"><path d="M1.2 1.2V20.4L15.6 10.8Z" fill="#9aa0a6"/></svg>
<span class="a t dm" style="left:1845.3px;top:1125.3px;font-size:29.5px;line-height:29.5px;color:#5db0d7;letter-spacing:.05px;">0</span>
<span class="a t dm" style="left:1863.1px;top:1125.3px;font-size:29.5px;line-height:29.5px;color:#e8eaed;letter-spacing:.05px;">: {Year: "2000", Solar: 18, Nuclear: 62206, Hydro: 31807, Wind: 4727}</span>
<svg class="a" style="left:1821px;top:1172.1px;" width="18" height="22" viewBox="0 0 18 22"><path d="M1.2 1.2V20.4L15.6 10.8Z" fill="#9aa0a6"/></svg>
<span class="a t dm" style="left:1845.3px;top:1168.3px;font-size:29.5px;line-height:29.5px;color:#5db0d7;letter-spacing:.05px;">1</span>
<span class="a t dm" style="left:1863.1px;top:1168.3px;font-size:29.5px;line-height:29.5px;color:#e8eaed;letter-spacing:.05px;">: {Year: "2001", Solar: 24, Nuclear: 63708, Hydro: 43864, Wind: 6759}</span>
<svg class="a" style="left:1821px;top:1215.1px;" width="18" height="22" viewBox="0 0 18 22"><path d="M1.2 1.2V20.4L15.6 10.8Z" fill="#9aa0a6"/></svg>
<span class="a t dm" style="left:1845.3px;top:1211.3px;font-size:29.5px;line-height:29.5px;color:#5db0d7;letter-spacing:.05px;">2</span>
<span class="a t dm" style="left:1863.1px;top:1211.3px;font-size:29.5px;line-height:29.5px;color:#e8eaed;letter-spacing:.05px;">: {Year: "2002", Solar: 30, Nuclear: 63016, Hydro: 26270, Wind: 9342}</span>
<svg class="a" style="left:1821px;top:1258.1px;" width="18" height="22" viewBox="0 0 18 22"><path d="M1.2 1.2V20.4L15.6 10.8Z" fill="#9aa0a6"/></svg>
<span class="a t dm" style="left:1845.3px;top:1254.3px;font-size:29.5px;line-height:29.5px;color:#5db0d7;letter-spacing:.05px;">3</span>
<span class="a t dm" style="left:1863.1px;top:1254.3px;font-size:29.5px;line-height:29.5px;color:#e8eaed;letter-spacing:.05px;">: {Year: "2003", Solar: 41, Nuclear: 61875, Hydro: 43897, Wind: 12075}</span>
<svg class="a" style="left:1821px;top:1301.1px;" width="18" height="22" viewBox="0 0 18 22"><path d="M1.2 1.2V20.4L15.6 10.8Z" fill="#9aa0a6"/></svg>
<span class="a t dm" style="left:1845.3px;top:1297.3px;font-size:29.5px;line-height:29.5px;color:#5db0d7;letter-spacing:.05px;">4</span>
<span class="a t dm" style="left:1863.1px;top:1297.3px;font-size:29.5px;line-height:29.5px;color:#e8eaed;letter-spacing:.05px;">: {Year: "2004", Solar: 56, Nuclear: 63606, Hydro: 34439, Wind: 15700}</span>
<svg class="a" style="left:1821px;top:1344.1px;" width="18" height="22" viewBox="0 0 18 22"><path d="M1.2 1.2V20.4L15.6 10.8Z" fill="#9aa0a6"/></svg>
<span class="a t dm" style="left:1845.3px;top:1340.3px;font-size:29.5px;line-height:29.5px;color:#5db0d7;letter-spacing:.05px;">5</span>
<span class="a t dm" style="left:1863.1px;top:1340.3px;font-size:29.5px;line-height:29.5px;color:#e8eaed;letter-spacing:.05px;">: {Year: "2005", Solar: 41, Nuclear: 57539, Hydro: 23025, Wind: 21176}</span>
<svg class="a" style="left:1821px;top:1387.1px;" width="18" height="22" viewBox="0 0 18 22"><path d="M1.2 1.2V20.4L15.6 10.8Z" fill="#9aa0a6"/></svg>
<span class="a t dm" style="left:1845.3px;top:1383.3px;font-size:29.5px;line-height:29.5px;color:#5db0d7;letter-spacing:.05px;">6</span>
<span class="a t dm" style="left:1863.1px;top:1383.3px;font-size:29.5px;line-height:29.5px;color:#e8eaed;letter-spacing:.05px;">: {Year: "2006", Solar: 119, Nuclear: 60126, Hydro: 29831, Wind: 23297}</span>
<svg class="a" style="left:1821px;top:1430.1px;" width="18" height="22" viewBox="0 0 18 22"><path d="M1.2 1.2V20.4L15.6 10.8Z" fill="#9aa0a6"/></svg>
<span class="a t dm" style="left:1845.3px;top:1426.3px;font-size:29.5px;line-height:29.5px;color:#5db0d7;letter-spacing:.05px;">7</span>
<span class="a t dm" style="left:1863.1px;top:1426.3px;font-size:29.5px;line-height:29.5px;color:#e8eaed;letter-spacing:.05px;">: {Year: "2007", Solar: 508, Nuclear: 55103, Hydro: 30522, Wind: 27568}</span>
<div class="a" style="left:3788.5px;top:1063.2px;width:51.5px;height:403px;background:#424242;"></div>
<svg class="a" style="left:3789px;top:1063.5px;" width="50" height="50" viewBox="0 0 50 50"><path d="M12.3 32H38.2L25.2 18.7Z" fill="#8b8b8b"/></svg>
<div class="a" style="left:3790.5px;top:1114px;width:47.5px;height:267.5px;background:#686868;"></div>
<svg class="a" style="left:3789px;top:1411px;" width="50" height="50" viewBox="0 0 50 50"><path d="M12.3 17.7H38.2L25.2 31Z" fill="#fff"/></svg>
<div class="a" style="left:0px;top:1460px;width:1768px;height:6px;background:#494c50;"></div>
<div class="a" style="left:1768px;top:1462px;width:2072px;height:4px;background:#494c50;"></div>
<div class="a" style="left:75.8px;top:1464.4px;width:167.2px;height:1.6px;background:#000;"></div>
</body></html>
